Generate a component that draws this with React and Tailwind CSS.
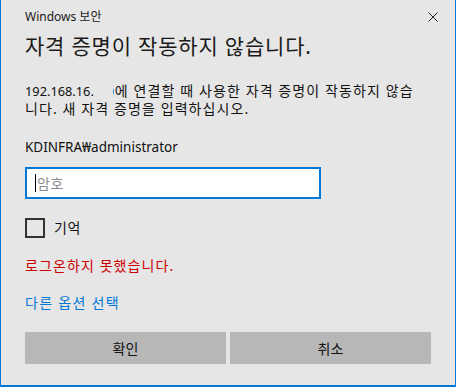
import React from "react";

const font = {
  fontFamily: '"Segoe UI", "Noto Sans", "Noto Sans CJK KR", sans-serif',
};

export default function App() {
  return (
    <div
      style={font}
      className="flex h-[387px] w-[456px] flex-col border-x border-b-2 border-[#0078d7] bg-[#e6e6e6] pl-[24px] text-[#000]"
    >
      <div className="flex items-start justify-between pr-[17px]">
        <div className="mt-[9px] text-[12px] leading-[16px] text-[#1a1a1a]">Windows 보안</div>
        <svg className="mt-[12px]" width="10" height="10" viewBox="0 0 10 10">
          <path d="M0.5 0.5 L9.5 9.5 M9.5 0.5 L0.5 9.5" stroke="#222" strokeWidth="1" />
        </svg>
      </div>

      <h1 className="mt-[7px] text-[21px] leading-[28px] font-normal tracking-[0.8px] text-[#1a1a1a]">
        자격 증명이 작동하지 않습니다.
      </h1>

      {/* ip is partly blanked out in the original */}
      <p className="mt-[22px] text-[12.8px] leading-[17px] text-[#111]">
        192.168.16.
        <span className="ml-[19px] inline-block w-[2px] overflow-hidden align-bottom">
          <span className="-ml-[6px] inline-block">0</span>
        </span>
        <span className="text-[14px] tracking-[1.1px]">
          에 연결할 때 사용한 자격 증명이 작동하지 않습
          <br />
          니다. 새 자격 증명을 입력하십시오.
        </span>
      </p>

      <div className="mt-[21px] text-[13.5px] leading-[17px] text-[#111]">KDINFRA₩administrator</div>

      <div className="mt-[11px] flex h-[32px] w-[296px] items-center border-2 border-[#0078d7] bg-white pl-[8px]">
        <div className="h-[18px] w-px bg-black" />
        <span className="ml-px text-[14px] tracking-[0.5px] text-[#8c8c8c]">암호</span>
      </div>

      <label className="mt-[19px] flex items-center gap-[9px]">
        <span className="h-[20px] w-[20px] border-2 border-[#333]" />
        <span className="text-[14px] leading-[20px] tracking-[0.5px] text-[#111]">기억</span>
      </label>

      <div className="mt-[19px] text-[14px] leading-[18px] tracking-[1.1px] text-[#cc0000]">
        로그온하지 못했습니다.
      </div>

      <div className="mt-[19px] text-[14px] leading-[18px] tracking-[1.3px] text-[#0078d7]">
        다른 옵션 선택
      </div>

      <div className="mt-[20px] flex gap-[4px]">
        <button className="h-[32px] w-[201px] bg-[#b7b7b7] text-[14px] text-[#111]">확인</button>
        <button className="h-[32px] w-[201px] bg-[#b7b7b7] text-[14px] text-[#111]">취소</button>
      </div>
    </div>
  );
}
